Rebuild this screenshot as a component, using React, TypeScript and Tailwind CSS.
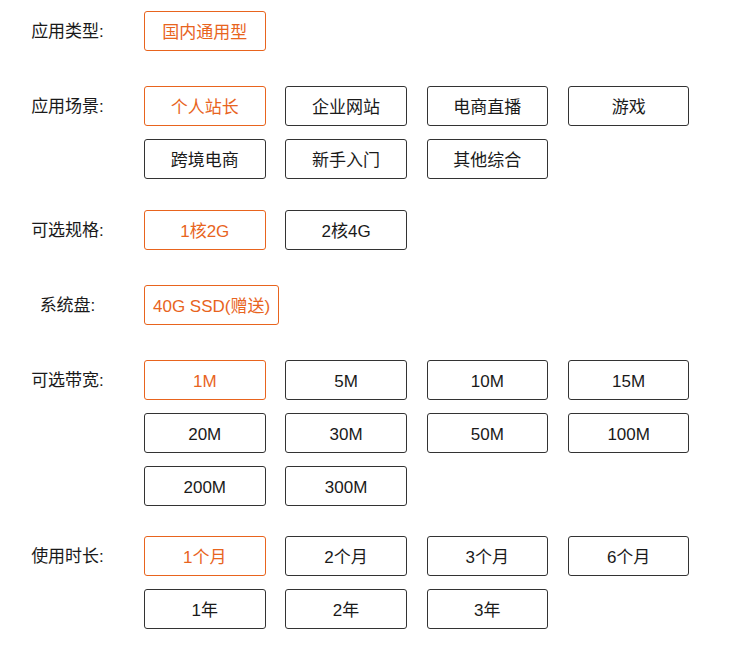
import React from 'react'

interface Section {
    label: string
    options: string[]
    gapAfter: string
}

const sections: Section[] = [
    { label: '应用类型:', options: ['国内通用型'], gapAfter: 'mb-[35px]' },
    {
        label: '应用场景:',
        options: ['个人站长', '企业网站', '电商直播', '游戏', '跨境电商', '新手入门', '其他综合'],
        gapAfter: 'mb-[31px]',
    },
    { label: '可选规格:', options: ['1核2G', '2核4G'], gapAfter: 'mb-[35px]' },
    { label: '系统盘:', options: ['40G SSD(赠送)'], gapAfter: 'mb-[35px]' },
    {
        label: '可选带宽:',
        options: ['1M', '5M', '10M', '15M', '20M', '30M', '50M', '100M', '200M', '300M'],
        gapAfter: 'mb-[30px]',
    },
    {
        label: '使用时长:',
        options: ['1个月', '2个月', '3个月', '6个月', '1年', '2年', '3年'],
        gapAfter: 'mb-0',
    },
]

function OptionButton({ text, active }: { text: string; active: boolean }) {
    return (
        <div
            className={
                active
                    ? 'h-[40px] min-w-[121.5px] px-[8px] pt-[3px] flex items-center justify-center rounded-[3px] border border-[#e8641e] text-[#e8641e] text-[17px] whitespace-nowrap'
                    : 'h-[40px] min-w-[121.5px] px-[8px] pt-[3px] flex items-center justify-center rounded-[3px] border border-[#333333] text-[#1a1a1a] text-[17px] whitespace-nowrap'
            }
        >
            {text}
        </div>
    )
}

export default function App() {
    return (
        <div
            className="w-[737px] h-[648px] bg-white pt-[11px]"
            style={{ fontFamily: '"Liberation Sans", "Noto Sans CJK SC", sans-serif' }}
        >
            {sections.map((s) => (
                <div key={s.label} className={`flex ${s.gapAfter}`}>
                    {/* Label */}
                    <div className="w-[135px] shrink-0 h-[40px] leading-[42px] text-center text-[17px] text-[#1a1a1a]">
                        {s.label}
                    </div>

                    {/* Options */}
                    <div className="ml-[9px] w-[566px] flex flex-wrap gap-x-[19.8px] gap-y-[13px]">
                        {s.options.map((o, i) => (
                            <OptionButton key={o} text={o} active={i === 0} />
                        ))}
                    </div>
                </div>
            ))}
        </div>
    )
}
